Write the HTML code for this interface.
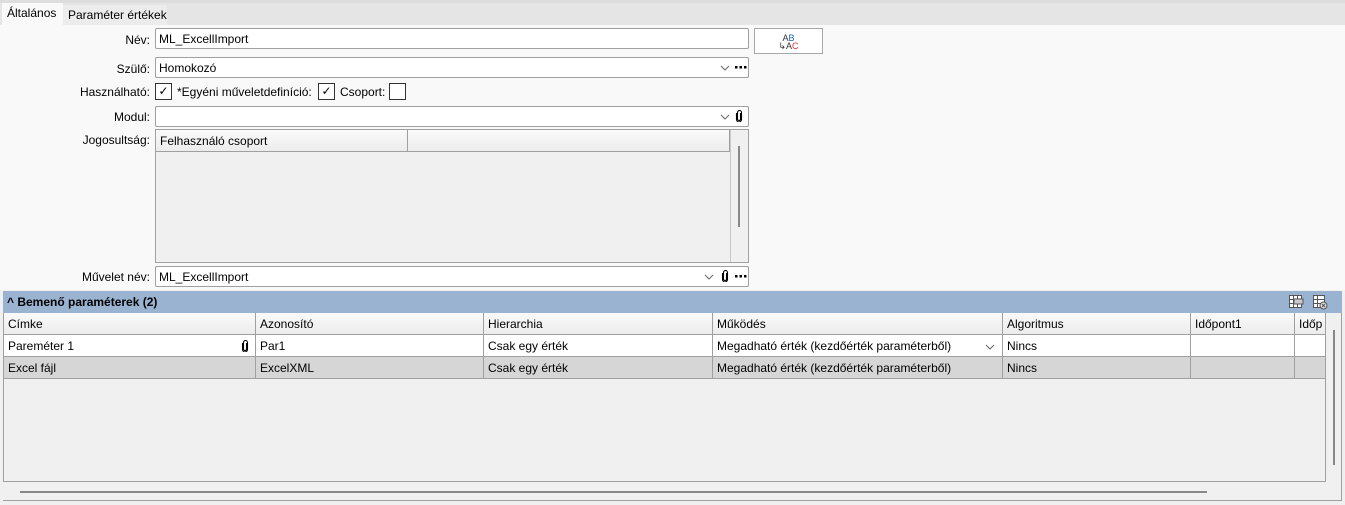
<!DOCTYPE html>
<html><head><meta charset="utf-8"><style>
*{box-sizing:border-box;margin:0;padding:0}
body{width:1345px;height:505px;background:#f0f0f0;font-family:"Liberation Sans",sans-serif;font-size:12px;color:#000;position:relative;overflow:hidden}
.a{position:absolute}
.lbl{position:absolute;text-align:right;width:150px;left:0}
.inp{position:absolute;background:#fff;border:1px solid #a0a0a0;border-radius:2px;padding:3px 0 0 3px;height:21px;white-space:nowrap}
.cb{position:absolute;width:17px;height:17px;border:1px solid #333;background:#fff;text-align:center;font-size:12px;line-height:15px}
.hd{position:absolute;background:linear-gradient(#fafafa,#ececec);border-right:1px solid #a0a0a0;border-bottom:1px solid #a0a0a0;padding:4px 4px;height:22px;white-space:nowrap;overflow:hidden}
.c{position:absolute;border-right:1px solid #a0a0a0;border-bottom:1px solid #a0a0a0;padding:4px 4px;height:22px;white-space:nowrap;overflow:hidden}
svg{position:absolute}
</style></head><body>
<div class="a" style="left:0;top:0;width:1345px;height:25px;background:#e5e5e5;border-top:3px solid #ddd"></div>
<div class="a" style="left:0;top:25px;width:1345px;height:265px;background:#f9f9f9"></div>
<div class="a" style="left:2px;top:3px;width:61px;height:22px;background:#f9f9f9;padding:3px 0 0 5px">Általános</div>
<div class="a" style="left:63px;top:5px;width:104px;height:20px;background:#ececec;padding:3px 0 0 5px">Paraméter értékek</div>

<div class="lbl" style="top:33px">Név:</div>
<div class="inp" style="left:155px;top:28px;width:594px">ML_ExcellImport</div>
<div class="a" style="left:754px;top:28px;width:69px;height:26px;border:1px solid #a8a8a8;background:#fff;font-size:9px;line-height:8px;text-align:center;padding-top:5px;color:#333">A<span style="color:#1f5fb0">B</span><br>↳A<span style="color:#e03030">C</span></div>

<svg width="0" height="0"><defs>
<symbol id="chev" viewBox="0 0 10 6"><path d="M1 1 L5 5 L9 1" fill="none" stroke="#666" stroke-width="1"/></symbol>
<symbol id="dots" viewBox="0 0 14 4"><rect x="1" y="1" width="2.5" height="2.5" fill="#000"/><rect x="5.5" y="1" width="2.5" height="2.5" fill="#000"/><rect x="10" y="1" width="2.5" height="2.5" fill="#000"/></symbol>
<symbol id="clip" viewBox="0 0 8 12"><path d="M5.5 3 V9 A1.5 1.5 0 0 1 2.5 9 V2.5 A2 2 0 0 1 6.5 2.5 V9.5 A2.5 2.5 0 0 1 1.5 9.5 V3" fill="none" stroke="#000" stroke-width="1.1"/></symbol>
</defs></svg>

<div class="lbl" style="top:62px">Szülő:</div>
<div class="inp" style="left:155px;top:57px;width:594px">Homokozó
<svg style="left:564px;top:7px" width="10" height="6"><use href="#chev"/></svg>
<svg style="left:578px;top:7px" width="14" height="4"><use href="#dots"/></svg></div>

<div class="lbl" style="top:85px">Használható:</div>
<div class="cb" style="left:155px;top:83px">✓</div>
<div class="a" style="left:177px;top:85px">*Egyéni műveletdefiníció:</div>
<div class="cb" style="left:318px;top:83px">✓</div>
<div class="a" style="left:340px;top:85px">Csoport:</div>
<div class="cb" style="left:389px;top:83px"></div>

<div class="lbl" style="top:110px">Modul:</div>
<div class="inp" style="left:155px;top:106px;width:594px">
<svg style="left:564px;top:7px" width="10" height="6"><use href="#chev"/></svg>
<svg style="left:579px;top:3px" width="8" height="12"><use href="#clip"/></svg></div>

<div class="lbl" style="top:133px">Jogosultság:</div>
<div class="a" style="left:155px;top:129px;width:594px;height:134px;border:1px solid #a0a0a0;background:#f0f0f0"></div>
<div class="hd" style="left:156px;top:130px;width:252px">Felhasználó csoport</div>
<div class="hd" style="left:408px;top:130px;width:322px"></div>
<div class="a" style="left:730px;top:130px;width:1px;height:132px;background:#c8c8c8"></div>
<div class="a" style="left:738px;top:146px;width:2px;height:81px;background:#888"></div>

<div class="lbl" style="top:270px">Művelet név:</div>
<div class="inp" style="left:155px;top:266px;width:594px">ML_ExcellImport
<svg style="left:548px;top:7px" width="10" height="6"><use href="#chev"/></svg>
<svg style="left:565px;top:3px" width="8" height="12"><use href="#clip"/></svg>
<svg style="left:578px;top:7px" width="14" height="4"><use href="#dots"/></svg></div>

<div class="a" style="left:3px;top:291px;width:1339px;height:22px;background:#9ab3d0;font-weight:bold;padding:4px 0 0 4px">^ Bemenő paraméterek (2)</div>
<svg style="left:1288px;top:294px" width="16" height="16" viewBox="0 0 16 16"><rect x="1.5" y="1.5" width="12" height="12" fill="#fff" stroke="#555"/><path d="M1.5 5.5H13.5M1.5 9.5H13.5M5.5 1.5V13.5M9.5 1.5V13.5" stroke="#555"/><rect x="6" y="5" width="9" height="5" fill="#ccc" stroke="#555"/></svg>
<svg style="left:1312px;top:294px" width="16" height="16" viewBox="0 0 16 16"><rect x="1.5" y="1.5" width="11" height="12" fill="#fff" stroke="#555"/><path d="M1.5 5.5H12.5M1.5 9.5H12.5M5.5 1.5V13.5" stroke="#555"/><circle cx="11.5" cy="11.5" r="3.5" fill="#ddd" stroke="#555"/><path d="M10 10L13 13M13 10L10 13" stroke="#555"/></svg>

<div class="a" style="left:3px;top:313px;width:1323px;height:169px;border:1px solid #a0a0a0;background:#f0f0f0"></div>
<div class="hd" style="left:4px;top:313px;width:252px">Címke</div>
<div class="hd" style="left:256px;top:313px;width:228px">Azonosító</div>
<div class="hd" style="left:484px;top:313px;width:229px">Hierarchia</div>
<div class="hd" style="left:713px;top:313px;width:290px">Működés</div>
<div class="hd" style="left:1003px;top:313px;width:188px">Algoritmus</div>
<div class="hd" style="left:1191px;top:313px;width:104px">Időpont1</div>
<div class="hd" style="left:1295px;top:313px;width:30px;border-right:none">Időp</div>

<div class="c" style="left:4px;top:335px;width:252px;background:#fff">Pareméter 1<svg style="left:237px;top:5px" width="8" height="12"><use href="#clip"/></svg></div>
<div class="c" style="left:256px;top:335px;width:228px;background:#fff">Par1</div>
<div class="c" style="left:484px;top:335px;width:229px;background:#fff">Csak egy érték</div>
<div class="c" style="left:713px;top:335px;width:290px;background:#fff">Megadható érték (kezdőérték paraméterből)<svg style="left:272px;top:9px" width="10" height="6"><use href="#chev"/></svg></div>
<div class="c" style="left:1003px;top:335px;width:188px;background:#fff">Nincs</div>
<div class="c" style="left:1191px;top:335px;width:104px;background:#fff"></div>
<div class="c" style="left:1295px;top:335px;width:30px;background:#fff;border-right:none"></div>

<div class="c" style="left:4px;top:357px;width:252px;background:#d6d6d6">Excel fájl</div>
<div class="c" style="left:256px;top:357px;width:228px;background:#d6d6d6">ExcelXML</div>
<div class="c" style="left:484px;top:357px;width:229px;background:#d6d6d6">Csak egy érték</div>
<div class="c" style="left:713px;top:357px;width:290px;background:#d6d6d6">Megadható érték (kezdőérték paraméterből)</div>
<div class="c" style="left:1003px;top:357px;width:188px;background:#d6d6d6">Nincs</div>
<div class="c" style="left:1191px;top:357px;width:104px;background:#d6d6d6"></div>
<div class="c" style="left:1295px;top:357px;width:30px;background:#d6d6d6;border-right:none"></div>

<div class="a" style="left:1333px;top:330px;width:2px;height:135px;background:#888"></div>
<div class="a" style="left:20px;top:491px;width:1187px;height:2px;background:#888"></div>
<div class="a" style="left:3px;top:500px;width:1339px;height:1px;background:#a0a0a0"></div>
<div class="a" style="left:1341px;top:313px;width:1px;height:188px;background:#a0a0a0"></div>
</body></html>
